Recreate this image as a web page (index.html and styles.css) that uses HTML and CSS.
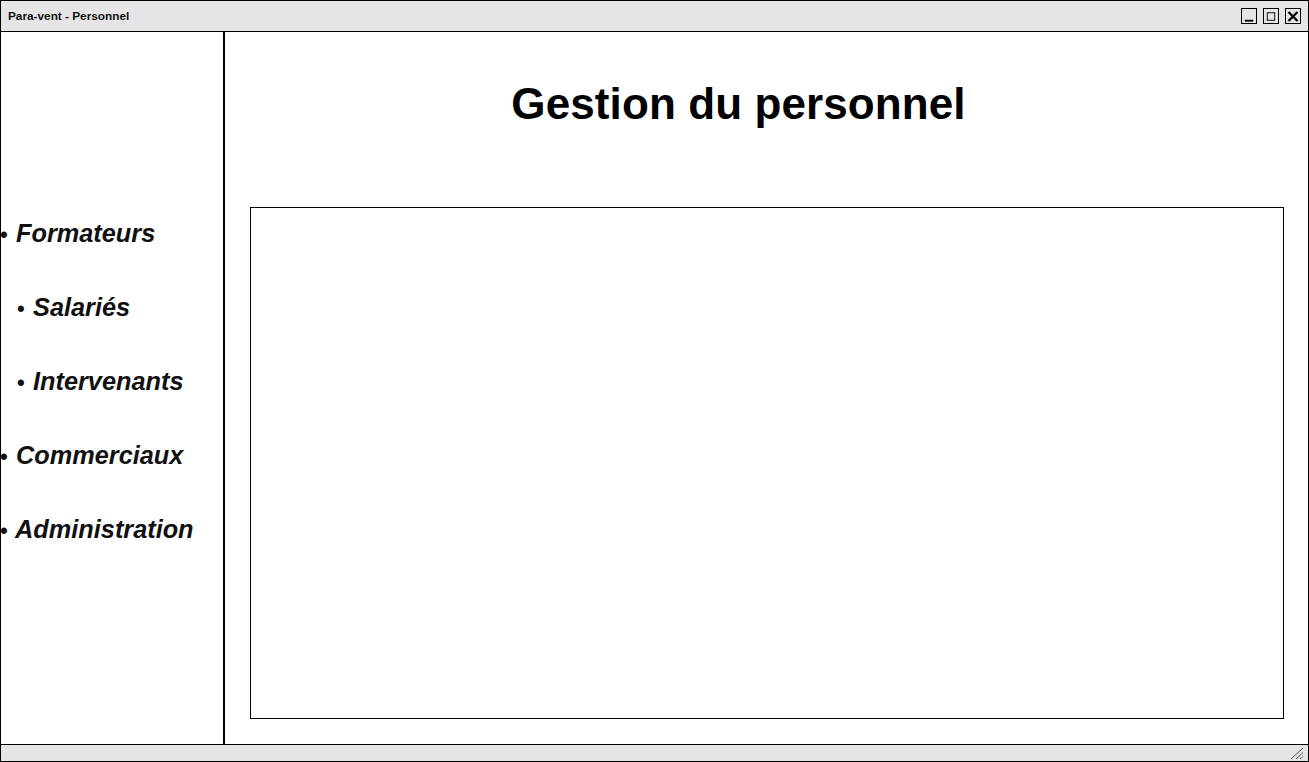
FILE: index.html
```html
<!DOCTYPE html>
<html lang="fr">
<head>
<meta charset="utf-8">
<title>Para-vent - Personnel</title>
<link rel="stylesheet" href="styles.css">
</head>
<body>
<div class="window">
  <header class="titlebar">
    <span class="title">Para-vent - Personnel</span>
    <div class="controls">
      <span class="ctl ctl-min"><svg width="15" height="15" viewBox="0 0 15 15"><rect x="3" y="11" width="9" height="2" fill="#000"/></svg></span>
      <span class="ctl ctl-max"><svg width="15" height="15" viewBox="0 0 15 15"><rect x="3.5" y="3.5" width="8" height="8" fill="none" stroke="#000" stroke-width="1"/></svg></span>
      <span class="ctl ctl-close"><svg width="15" height="15" viewBox="0 0 15 15"><path d="M3.5 3.5 L11.5 11.5 M11.5 3.5 L3.5 11.5" stroke="#000" stroke-width="2.4" stroke-linecap="square"/></svg></span>
    </div>
  </header>
  <div class="main">
    <nav class="sidebar">
      <ul class="menu">
        <li class="item"><span class="dot">•</span> Formateurs</li>
        <li class="item sub"><span class="dot">•</span> Salariés</li>
        <li class="item sub"><span class="dot">•</span> Intervenants</li>
        <li class="item"><span class="dot">•</span> Commerciaux</li>
        <li class="item"><span class="dot">•</span> Administration</li>
      </ul>
    </nav>
    <section class="content">
      <h1 class="heading">Gestion du personnel</h1>
      <div class="panel"></div>
    </section>
  </div>
  <footer class="statusbar">
    <svg class="grip" width="16" height="12" viewBox="0 0 16 12">
      <path d="M3 12 L15 1 M8 12 L15 5.5 M12 12 L15 9.5" stroke="#555" stroke-width="1"/>
    </svg>
  </footer>
</div>
</body>
</html>
```

FILE: styles.css
```css
* { box-sizing: border-box; }
html, body { margin: 0; padding: 0; background: #fff; }
body { font-family: "Liberation Sans", Arial, sans-serif; color: #000; }

.window {
  width: 1309px;
  height: 762px;
  border: 1px solid #000;
  display: flex;
  flex-direction: column;
  overflow: hidden;
}

.titlebar {
  height: 31px;
  flex: 0 0 31px;
  background: #e5e5e5;
  border-bottom: 1px solid #000;
  display: flex;
  align-items: center;
  justify-content: space-between;
  padding: 0 7px 0 7px;
}
.title { font-size: 11.8px; font-weight: bold; color: #111; }
.controls { display: flex; gap: 6px; align-items: center; }
.ctl {
  width: 16px; height: 16px;
  border: 1px solid #000;
  display: flex; align-items: center; justify-content: center;
  background: #e5e5e5;
}
.ctl svg { display: block; }

.main { flex: 1; display: flex; min-height: 0; }

.sidebar {
  width: 224px;
  flex: 0 0 224px;
  border-right: 2px solid #000;
  padding-top: 187px;
}
.menu { list-style: none; margin: 0; padding: 0; margin-left: -1px; }
.item {
  font-size: 25.3px;
  font-weight: bold;
  font-style: italic;
  color: #111;
  height: 74px;
  line-height: 28px;
  white-space: nowrap;
}
.item.sub { padding-left: 17px; }
.dot {
  display: inline-block;
  width: 9px;
  font-size: 22px;
  font-style: normal;
  font-weight: bold;
}

.content { flex: 1; display: flex; flex-direction: column; padding: 0 24px 25px 25px; }
.heading {
  margin: 0;
  padding: 47px 57px 0 0;
  height: 175px;
  text-align: center;
  font-size: 44px;
  line-height: 50px;
  letter-spacing: 0.1px;
  font-weight: bold;
  color: #000;
}
.panel { flex: 1; border: 1px solid #000; }

.statusbar {
  flex: 0 0 17px;
  height: 17px;
  background: #e5e5e5;
  border-top: 1px solid #000;
  display: flex;
  justify-content: flex-end;
  align-items: flex-end;
  padding: 0 4px 2px 0;
}
.grip { display: block; }
```
